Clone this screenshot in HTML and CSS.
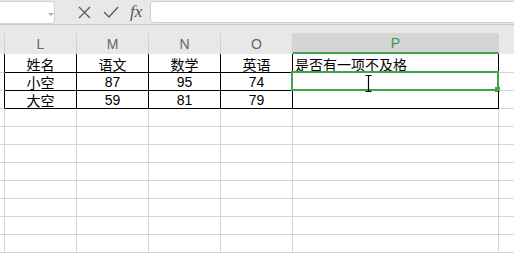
FILE: index.html
```html
<!DOCTYPE html>
<html lang="zh">
<head>
<meta charset="utf-8">
<link rel="stylesheet" href="styles.css">
</head>
<body>
<div class="app">
  <div class="fbar">
    <div class="namebox"><span class="arrow"></span></div>
    <div class="ficons">
      <svg class="ico-x" width="13" height="13" viewBox="0 0 13 13"><path d="M1 1 L12 12 M12 1 L1 12" stroke="#5a5a5a" stroke-width="1.2" fill="none"/></svg>
      <svg class="ico-ok" width="16" height="12" viewBox="0 0 16 12"><path d="M1 6 L6 11 L15 1" stroke="#5a5a5a" stroke-width="1.3" fill="none"/></svg>
      <span class="fx">fx</span>
    </div>
    <div class="finput"></div>
  </div>
  <div class="hstrip"></div>
  <div class="grid">
    <div class="h k"></div><div class="h">L</div><div class="h">M</div><div class="h">N</div><div class="h">O</div><div class="h sel">P</div><div class="h q"></div>

    <div class="c k kb r1"></div><div class="c b r1">姓名</div><div class="c b r1">语文</div><div class="c b r1">数学</div><div class="c b r1">英语</div><div class="c b r1 left">是否有一项不及格</div><div class="c q r1"></div>

    <div class="c k kb"></div><div class="c b">小空</div><div class="c b num">87</div><div class="c b num">95</div><div class="c b num">74</div><div class="c b active"><div class="selbox"><span class="handle"></span></div><svg class="ibeam" width="7" height="17" viewBox="0 0 7 17"><path d="M0.5 0.5 H6.5 M3.5 0.5 V16.5 M0.5 16.5 H6.5" stroke="#000" stroke-width="1.2" fill="none"/></svg></div><div class="c q"></div>

    <div class="c k kb"></div><div class="c b">大空</div><div class="c b num">59</div><div class="c b num">81</div><div class="c b num">79</div><div class="c b"></div><div class="c q"></div>

    <div class="c k"></div><div class="c"></div><div class="c"></div><div class="c"></div><div class="c"></div><div class="c"></div><div class="c q"></div>
    <div class="c k"></div><div class="c"></div><div class="c"></div><div class="c"></div><div class="c"></div><div class="c"></div><div class="c q"></div>
    <div class="c k"></div><div class="c"></div><div class="c"></div><div class="c"></div><div class="c"></div><div class="c"></div><div class="c q"></div>
    <div class="c k"></div><div class="c"></div><div class="c"></div><div class="c"></div><div class="c"></div><div class="c"></div><div class="c q"></div>
    <div class="c k"></div><div class="c"></div><div class="c"></div><div class="c"></div><div class="c"></div><div class="c"></div><div class="c q"></div>
    <div class="c k"></div><div class="c"></div><div class="c"></div><div class="c"></div><div class="c"></div><div class="c"></div><div class="c q"></div>
    <div class="c k"></div><div class="c"></div><div class="c"></div><div class="c"></div><div class="c"></div><div class="c"></div><div class="c q"></div>
    <div class="c k"></div><div class="c"></div><div class="c"></div><div class="c"></div><div class="c"></div><div class="c"></div><div class="c q"></div>
  </div>
</div>
</body>
</html>
```

FILE: styles.css
```css
html, body {
  margin: 0;
  padding: 0;
  background: #fff;
  overflow: hidden;
}
.app {
  width: 514px;
  height: 259px;
  overflow: hidden;
  font-family: "Liberation Sans", "Noto Sans CJK SC", sans-serif;
}
.fbar {
  height: 24px;
  background: #e8e8e8;
  border-bottom: 1px solid #cbcbcb;
  display: flex;
  align-items: flex-start;
}
.namebox {
  box-sizing: border-box;
  width: 60px;
  height: 23px;
  margin-top: 1px;
  margin-left: -5px;
  background: #fff;
  border: 1px solid #d2d2d2;
  border-radius: 4px;
  position: relative;
}
.arrow {
  position: absolute;
  left: 52px;
  top: 11px;
  width: 0;
  height: 0;
  border-left: 3px solid transparent;
  border-right: 3px solid transparent;
  border-top: 3px solid #b0b0b0;
}
.ficons {
  display: flex;
  align-items: center;
  height: 24px;
  margin-left: 23px;
}
.ico-x { margin-right: 12px; }
.ico-ok { margin-right: 11px; }
.fx {
  font-family: "Liberation Serif", serif;
  font-style: italic;
  font-size: 17px;
  color: #555;
  line-height: 24px;
}
.finput {
  flex: 1;
  box-sizing: border-box;
  height: 22px;
  margin-top: 1px;
  margin-left: 8px;
  margin-right: -6px;
  background: #fff;
  border: 1px solid #cfcfcf;
  border-radius: 4px;
}
.hstrip {
  height: 8px;
  background: #e8e8e8;
}
.grid {
  display: grid;
  grid-template-columns: 5px 72px 72px 72px 72px 206px 1fr;
  grid-template-rows: 21px 19px repeat(11, 18px);
}
.h {
  box-sizing: border-box;
  background: #e8e8e8;
  border-right: 1px solid #d0d0d0;
  color: #666;
  font-size: 14px;
  display: flex;
  align-items: center;
  justify-content: center;
  padding-top: 1px;
}
.h.sel {
  background: #d5d5d5;
  color: #3a9a48;
  border-bottom: 2px solid #3ea54a;
  border-right-color: #d5d5d5;
}
.h.q { border-right: none; }
.c {
  box-sizing: border-box;
  border-right: 1px solid #d4d4d4;
  border-bottom: 1px solid #d4d4d4;
  font-family: "Noto Sans CJK SC", sans-serif;
  font-size: 14px;
  color: #000;
  display: flex;
  align-items: center;
  justify-content: center;
  line-height: 1;
  position: relative;
}
.c.r1 { padding-top: 1px; }
.c.b {
  border-right-color: #000;
  border-bottom-color: #000;
}
.c.kb { border-right-color: #000; }
.c.q { border-right: none; }
.c.num {
  font-family: "Liberation Sans", sans-serif;
  font-size: 14px;
}
.c.left {
  justify-content: flex-start;
  padding-left: 2px;
}
.selbox {
  position: absolute;
  top: -2px;
  left: -2px;
  right: -1px;
  bottom: -1px;
  border: 2px solid #3ea54a;
}
.handle {
  position: absolute;
  right: -3px;
  bottom: -3px;
  width: 5px;
  height: 5px;
  background: #3ea54a;
}
.ibeam {
  position: absolute;
  left: 72px;
  top: 2px;
}
```
